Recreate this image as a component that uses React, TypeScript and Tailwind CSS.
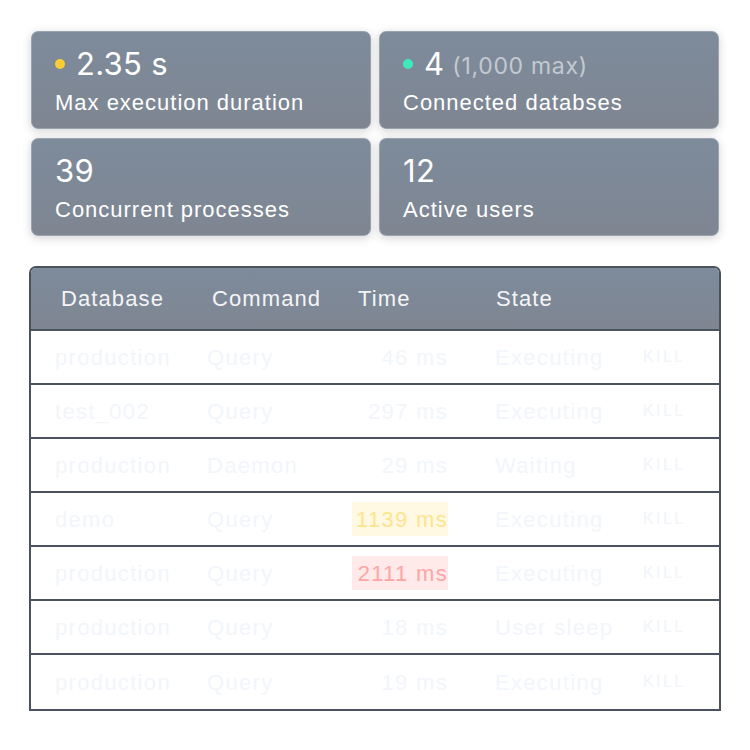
const rows = [
  { db: 'production', cmd: 'Query', time: '46 ms', state: 'Executing', level: '' },
  { db: 'test_002', cmd: 'Query', time: '297 ms', state: 'Executing', level: '' },
  { db: 'production', cmd: 'Daemon', time: '29 ms', state: 'Waiting', level: '' },
  { db: 'demo', cmd: 'Query', time: '1139 ms', state: 'Executing', level: 'warn' },
  { db: 'production', cmd: 'Query', time: '2111 ms', state: 'Executing', level: 'error' },
  { db: 'production', cmd: 'Query', time: '18 ms', state: 'User sleep', level: '' },
  { db: 'production', cmd: 'Query', time: '19 ms', state: 'Executing', level: '' },
];

const font = { fontFamily: '"Liberation Sans", Arial, sans-serif' };

function StatCard({
  value,
  extra,
  label,
  dot,
}: {
  value: string;
  extra?: string;
  label: string;
  dot?: string;
}) {
  return (
    <div className="h-[98px] rounded-[7px] border border-[#9aa4b0] bg-gradient-to-b from-[#7d8b9b] to-[#7f8692] shadow-[0_2px_10px_rgba(0,0,0,0.18)] pl-[23px] pt-[14px]">
      <div className="flex items-center h-[36px]">
        {dot && <span className={`w-[10px] h-[10px] rounded-full mr-[11px] ${dot}`} />}
        <span className="text-[31px] text-white tracking-[0.01em]" style={{ fontFamily: 'Inter, sans-serif' }}>
          {value}
        </span>
        {extra && (
          <span className="ml-[8px] mt-[4px] text-[23px] text-[#c3c9d1] tracking-[0.03em]" style={{ fontFamily: 'Inter, sans-serif' }}>
            {extra}
          </span>
        )}
      </div>
      <div className="mt-[4px] text-[22px] text-white tracking-[0.045em]">{label}</div>
    </div>
  );
}

export default function App() {
  return (
    <div className="w-[750px] h-[750px] bg-white" style={font}>
      <div className="grid grid-cols-2 gap-x-[8px] gap-y-[9px] pt-[31px] px-[31px]">
        <StatCard value="2.35 s" label="Max execution duration" dot="bg-[#fbcd35]" />
        <StatCard value="4" extra="(1,000 max)" label="Connected databses" dot="bg-[#3fe9b9]" />
        <StatCard value="39" label="Concurrent processes" />
        <StatCard value="12" label="Active users" />
      </div>

      <div className="mt-[30px] mx-[29px] border-2 border-[#4a525d] rounded-t-[7px] overflow-hidden">
        <div className="h-[63px] flex items-center pl-[30px] bg-gradient-to-b from-[#7d8b9b] to-[#7f8692] border-b-2 border-[#4a525d] text-[22px] text-[#f4f5f7] tracking-[0.05em]">
          <div className="w-[151px]">Database</div>
          <div className="w-[146px]">Command</div>
          <div className="w-[138px]">Time</div>
          <div>State</div>
        </div>
        {rows.map((r, i) => (
          <div
            key={i}
            className={`h-[54px] flex items-center pl-[24px] text-[22px] text-[#f2f6fb] tracking-[0.06em] ${
              i < rows.length - 1 ? 'border-b-2 border-[#4a525d]' : ''
            }`}
          >
            <div className="w-[152px]">{r.db}</div>
            <div className="w-[145px]">{r.cmd}</div>
            <div
              className={`w-[96px] h-[34px] flex items-center justify-end whitespace-nowrap ${
                r.level === 'warn'
                  ? 'bg-[#fff8e2] text-[#fde58f]'
                  : r.level === 'error'
                  ? 'bg-[#ffe9e9] text-[#fca6a6]'
                  : ''
              }`}
            >
              {r.time}
            </div>
            <div className="w-[148px] ml-[47px] whitespace-nowrap">{r.state}</div>
            <div className="text-[16px] tracking-[0.15em] text-[#f1f4f9]">KILL</div>
          </div>
        ))}
      </div>
    </div>
  );
}
